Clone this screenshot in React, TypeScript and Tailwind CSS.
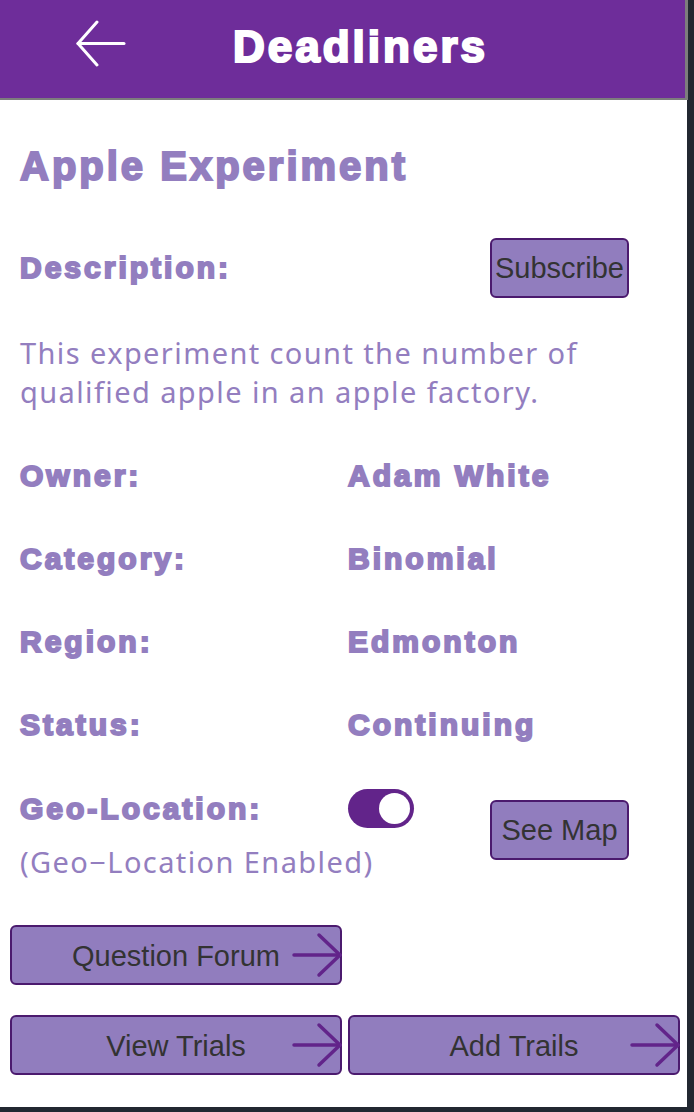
import React from "react";

const heavy =
  "font-['Liberation_Sans',Arial,sans-serif] font-bold text-[#937ebf] [-webkit-text-stroke:2px_#937ebf]";
const label = `${heavy} text-[30px] tracking-[3px] leading-none`;
const thin = "font-['Noto_Sans','Liberation_Sans',sans-serif] text-[#937ebf] text-[29px] tracking-[1.4px]";
const btn =
  "relative flex items-center justify-center bg-[#917dbe] border-2 border-[#4b1a6e] rounded-[6px] text-[#333333] font-['Liberation_Sans',Arial,sans-serif] text-[29px] leading-none";

function ArrowRight() {
  return (
    <svg
      className="absolute right-[-2px] top-[6px] overflow-visible"
      width="50"
      height="44"
      viewBox="0 0 50 44"
      fill="none"
      stroke="#62248a"
      strokeWidth="3.5"
      strokeLinecap="round"
      strokeLinejoin="round"
    >
      <path d="M2 22 H48" />
      <path d="M27 2 L48 22 L27 42" />
    </svg>
  );
}

function Row({ k, v }: { k: string; v: string }) {
  return (
    <div className="grid grid-cols-[328px_1fr] h-[40px] items-center">
      <span className={label}>{k}</span>
      <span className={label}>{v}</span>
    </div>
  );
}

export default function App() {
  return (
    <div className="w-[694px] h-[1112px] bg-[#222831] overflow-hidden">
      <div className="w-[687px] h-[1107px] bg-white flex flex-col">
        <header className="h-[100px] w-[688px] shrink-0 bg-[#6e2d9a] border-b-2 border-r-[3px] border-[#7d7d7d] flex items-start">
          <svg
            className="mt-[20px] ml-[76px] shrink-0"
            width="50"
            height="47"
            viewBox="0 0 50 47"
            fill="none"
            stroke="white"
            strokeWidth="3"
            strokeLinecap="round"
            strokeLinejoin="round"
          >
            <path d="M2 23.5 H48" />
            <path d="M21 2 L2 23.5 L21 45" />
          </svg>
          <h1 className="ml-[107px] mt-[25px] text-white font-['Liberation_Sans',Arial,sans-serif] font-bold text-[44px] leading-none tracking-[3px] [-webkit-text-stroke:2.2px_white]">
            Deadliners
          </h1>
        </header>

        <div className="pl-[20px] flex flex-col">
          <h2 className={`${heavy} text-[40px] leading-none tracking-[3px] mt-[46px] [-webkit-text-stroke:2.4px_#937ebf]`}>
            Apple Experiment
          </h2>

          <div className="mt-[52px] h-[60px] flex items-center">
            <span className={`${label} w-[470px]`}>Description:</span>
            <button className={`${btn} w-[139px] h-[60px]`}>Subscribe</button>
          </div>

          <p className={`${thin} leading-[39px] mt-[35px]`}>
            This experiment count the number of
            <br />
            qualified apple in an apple factory.
          </p>

          <div className="mt-[45px] flex flex-col gap-[43px]">
            <Row k="Owner:" v="Adam White" />
            <Row k="Category:" v="Binomial" />
            <Row k="Region:" v="Edmonton" />
            <Row k="Status:" v="Continuing" />
          </div>

          <div className="mt-[43px] grid grid-cols-[328px_142px_139px] grid-rows-[40px_auto]">
            <span className={`${label} self-center pt-[2px]`}>Geo-Location:</span>
            <div className="self-center w-[66px] h-[39px] rounded-full bg-[#62248a] flex items-center justify-end pr-[4px]">
              <div className="w-[31px] h-[31px] rounded-full bg-white" />
            </div>
            <button className={`${btn} row-span-2 self-start mt-[12px] h-[60px] w-[139px]`}>
              See Map
            </button>
            <p className={`${thin} col-span-2 leading-[39px] mt-[14px]`}>
              (Geo−Location Enabled)
            </p>
          </div>
        </div>

        <div className="pl-[10px] mt-[44px] flex flex-col gap-[30px]">
          <button className={`${btn} w-[332px] h-[60px] pt-[2px]`}>
            Question Forum
            <ArrowRight />
          </button>
          <div className="flex gap-[6px]">
            <button className={`${btn} w-[332px] h-[60px] pt-[2px]`}>
              View Trials
              <ArrowRight />
            </button>
            <button className={`${btn} w-[332px] h-[60px] pt-[2px]`}>
              Add Trails
              <ArrowRight />
            </button>
          </div>
        </div>
      </div>
    </div>
  );
}
